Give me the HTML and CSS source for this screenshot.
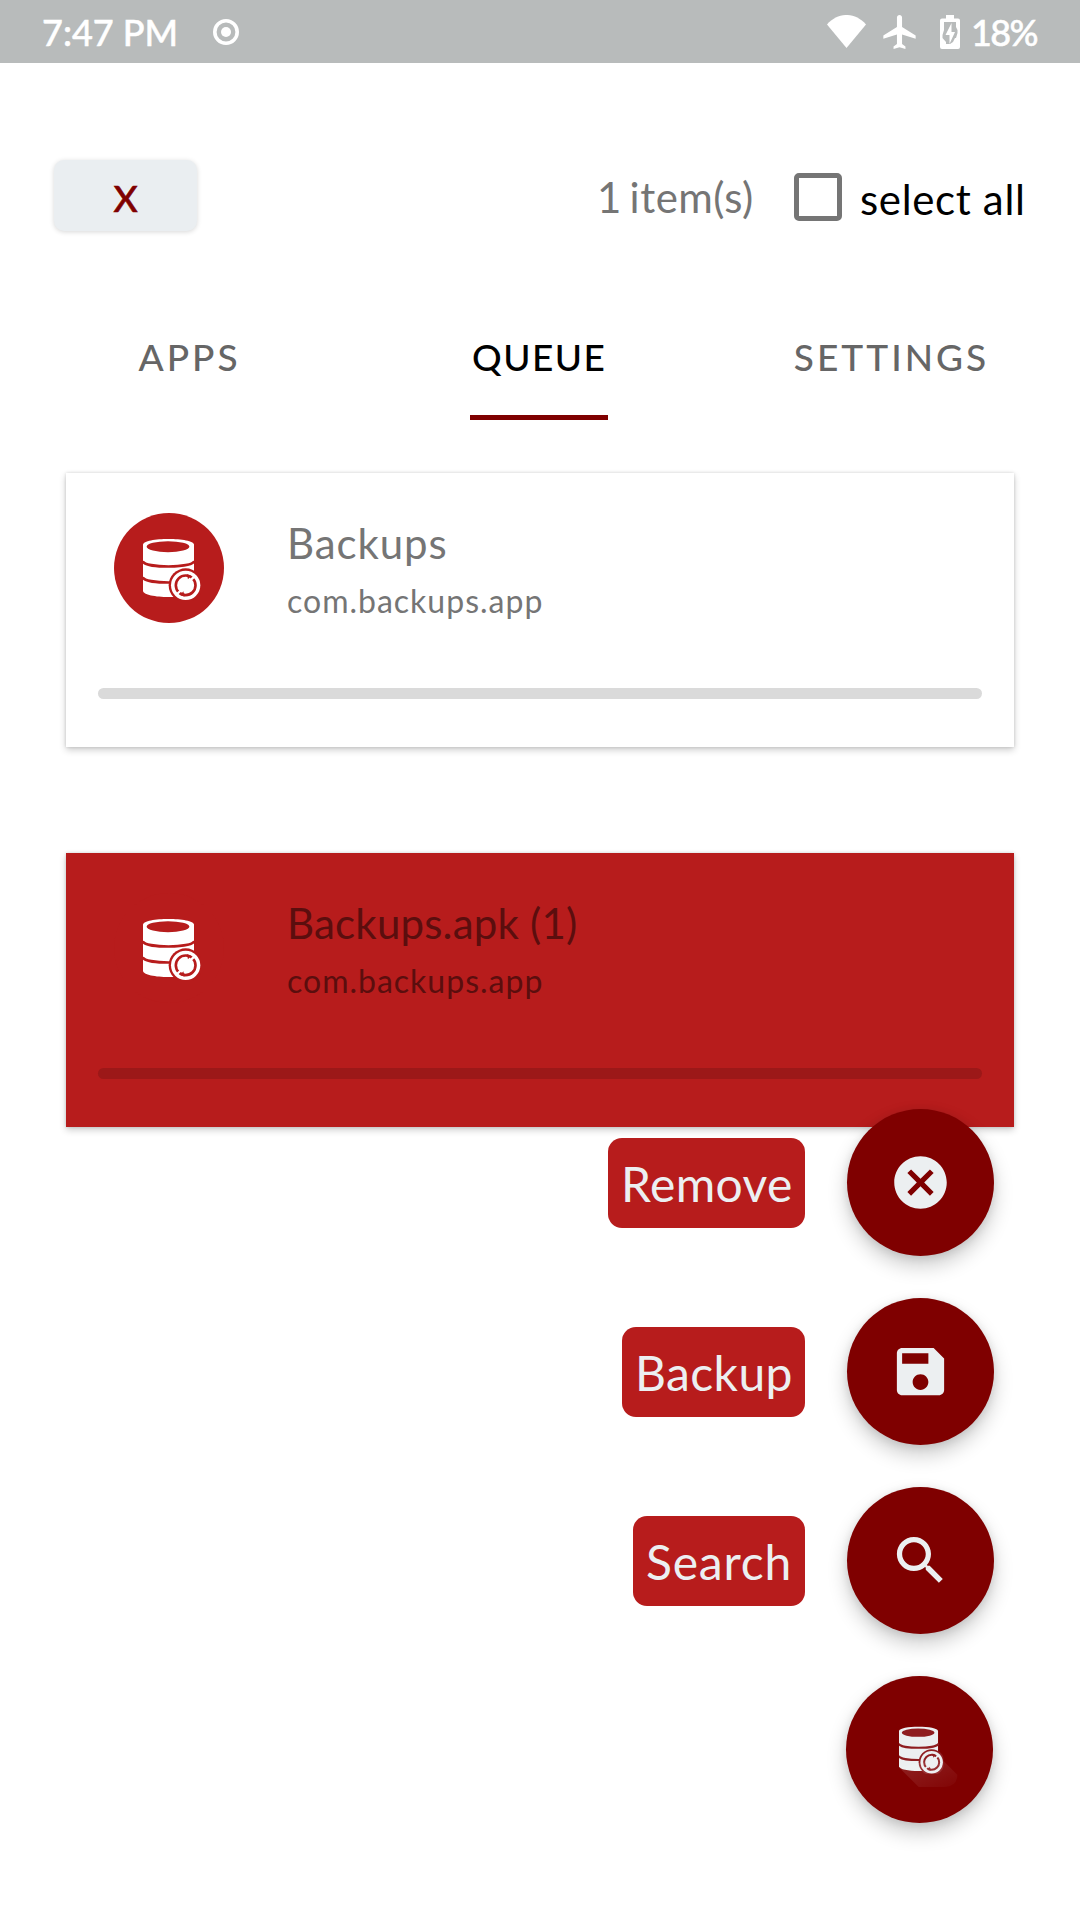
FILE: index.html
```html
<!DOCTYPE html>
<html lang="en">
<head>
<meta charset="utf-8">
<title>Backups</title>
<link rel="stylesheet" href="styles.css">
</head>
<body>
<svg class="defs" aria-hidden="true">
  <symbol id="database" viewBox="129 114 174 188">
    <path fill="currentColor" d="M129 134C129 111 282 111 282 134V272C282 297 129 297 129 272Z"/>
    <ellipse class="db-gap" cx="204" cy="140" rx="64" ry="16.500"/>
    <path class="db-line" d="M128 183C134 205 277 205 283 183M128 231C134 253 277 253 283 231"/>
    <circle class="db-ring" cx="257" cy="256" r="51"/>
    <circle fill="currentColor" cx="257" cy="256" r="44"/>
    <circle class="db-arrow" cx="257" cy="256" r="29.500"/>
    <path class="db-notch" d="M270 242L286 227M244 270L228 285"/>
    <path class="db-gap" d="M260 222L273 227L264 238ZM254 290L241 285L250 274Z"/>
  </symbol>
</svg>
<header class="status-bar">
  <span class="clock">7:47 PM</span>
  <svg class="target" viewBox="0 0 28 28"><circle cx="14" cy="14" r="11.200" fill="none" stroke="currentColor" stroke-width="3.600"/><circle cx="14" cy="14" r="5" fill="currentColor"/></svg>
  <div class="status-icons">
    <svg class="wifi" viewBox="0 0 39 33"><path d="M0 9.500C11-3.200 28-3.200 39 9.500L19.500 33Z"/></svg>
    <svg class="plane" viewBox="2 2 19 20"><path d="M21 16v-2l-8-5V3.500C13 2.670 12.330 2 11.500 2S10 2.670 10 3.500V9l-8 5v2l8-2.500V19l-2 1.500V22l3.500-1 3.500 1v-1.500L13 19v-5.500z"/></svg>
    <svg class="battery" viewBox="0 0 20 34"><path fill-rule="evenodd" d="M6 0H14V3.500H18Q20 3.500 20 5.500V32Q20 34 18 34H2Q0 34 0 32V5.500Q0 3.500 2 3.500H6ZM4 7V15L2.500 20V23L6 27V29H10L13 27L15 23H16L17.500 18V15L16 12V7Z"/><path d="M11.500 8L5.500 20H9.500V29L15 17H11.500Z"/></svg>
    <span class="charge">18%</span>
  </div>
</header>
<main>
  <section class="toolbar">
    <button class="clear">X</button>
    <span class="count">1 item(s)</span>
    <label class="select"><span class="box"></span><span class="select-text">select all</span></label>
  </section>
  <nav class="tabs">
    <a class="tab">APPS</a>
    <a class="tab active">QUEUE</a>
    <a class="tab settings">SETTINGS</a>
  </nav>
  <section class="list">
    <article class="card">
      <div class="app">
        <div class="avatar"><svg class="db"><use href="#database"/></svg></div>
        <div><h2 class="name">Backups</h2><p class="package">com.backups.app</p></div>
      </div>
      <div class="progress"></div>
    </article>
    <article class="card selected">
      <div class="app">
        <div class="avatar"><svg class="db"><use href="#database"/></svg></div>
        <div><h2 class="name">Backups.apk (1)</h2><p class="package">com.backups.app</p></div>
      </div>
      <div class="progress"></div>
    </article>
  </section>
</main>
<aside class="fab-menu">
  <div class="action"><span class="label remove">Remove</span><button class="fab"><svg viewBox="0 0 24 24"><path d="M12 2C6.470 2 2 6.470 2 12s4.470 10 10 10 10-4.470 10-10S17.530 2 12 2zm5 13.590L15.590 17 12 13.410 8.410 17 7 15.590 10.590 12 7 8.410 8.410 7 12 10.590 15.590 7 17 8.410 13.410 12 17 15.590z"/></svg></button></div>
  <div class="action"><span class="label backup">Backup</span><button class="fab"><svg viewBox="0 0 24 24"><path d="M17 3H5c-1.110 0-2 .9-2 2v14c0 1.100.89 2 2 2h14c1.100 0 2-.9 2-2V7l-4-4zm-5 16c-1.660 0-3-1.340-3-3s1.340-3 3-3 3 1.340 3 3-1.340 3-3 3zm3-10H5V5h10v4z"/></svg></button></div>
  <div class="action"><span class="label search">Search</span><button class="fab"><svg viewBox="0 0 24 24"><path d="M15.500 14h-.79l-.28-.27C15.410 12.590 16 11.110 16 9.500 16 5.910 13.090 3 9.500 3S3 5.910 3 9.500 5.910 16 9.500 16c1.610 0 3.090-.59 4.230-1.570l.27.28v.79l5 4.990L20.490 19l-4.990-5zm-6 0C7.010 14 5 11.990 5 9.500S7.010 5 9.500 5 14 7.010 14 9.500 11.990 14 9.500 14z"/></svg></button></div>
  <div class="action"><button class="fab main-fab"><svg class="cast" viewBox="0 0 180 180"><defs><linearGradient id="fade" x1="0" y1="0" x2="1" y2="1"><stop offset="0" stop-color="#fff" stop-opacity=".14"/><stop offset="1" stop-color="#fff" stop-opacity=".02"/></linearGradient></defs><path fill="url(#fade)" d="M4 122L62 180H140Q178 178 178 143L127 92Z"/></svg><svg class="db"><use href="#database"/></svg></button></div>
</aside>
</body>
</html>
```
FILE: styles.css
```css
* { box-sizing: border-box; }
body {
  margin: 0;
  height: 1920px;
  position: relative;
  overflow: hidden;
  background: #fff;
  color: #000;
  font-family: Lato, "Open Sans", sans-serif;
  font-size: 42px;
}
button { border: 0; padding: 0; font: inherit; }
h2, p { margin: 0; font-weight: 400; }
.defs { position: absolute; width: 0; height: 0; }

.status-bar {
  height: 63px;
  padding: 0 44px 0 42px;
  display: flex;
  align-items: center;
  background: #b8bbbb;
  color: #fff;
  font-size: 36px;
  font-weight: 500;
  line-height: 66px;
}
.status-bar svg { fill: currentColor; }
.clock, .charge { white-space: nowrap; -webkit-text-stroke: .5px currentColor; }
.clock { width: 170px; }
.target { width: 28px; height: 28px; }
.status-icons { margin-left: auto; display: flex; align-items: center; }
.wifi { width: 39px; height: 33px; margin-right: 17px; }
.plane { width: 33px; height: 34px; margin-right: 24px; }
.battery { width: 20px; height: 34px; margin-right: 11px; }
.charge { width: 65px; letter-spacing: -1.6px; }

.toolbar {
  height: 71px;
  margin: 97px 56px 0 54px;
  display: flex;
  align-items: center;
}
.clear {
  width: 143px;
  height: 71px;
  border-radius: 10px;
  background: #eaeef1;
  color: #7f0000;
  font-size: 37px;
  font-weight: 500;
  padding-top: 3px;
  -webkit-text-stroke: .6px currentColor;
  box-shadow: 0 1px 5px rgba(0, 0, 0, .16);
}
.count {
  margin-left: auto;
  width: 156px;
  margin-right: 41px;
  padding-top: 3px;
  color: #757575;
  letter-spacing: .5px;
  word-spacing: -3.500px;
  white-space: nowrap;
}
.select { display: flex; align-items: center; gap: 18px; }
.box { width: 48px; height: 48px; margin-top: 3px; border: 5px solid #757575; border-radius: 5px; }
.select-text { width: 164px; padding-top: 7px; letter-spacing: .65px; white-space: nowrap; }

.tabs {
  height: 126px;
  margin-top: 63px;
  display: grid;
  grid-template-columns: 379px 320px 381px;
  color: #666;
  font-size: 37px;
  font-weight: 500;
  letter-spacing: 3px;
}
.tab { justify-self: center; line-height: 126px; height: 126px; }
.settings { padding-left: 4px; }
.active { width: 138px; color: #000; border-bottom: 5px solid #7f0000; padding-left: 2px; letter-spacing: 1.500px; }

.list {
  padding: 53px 66px 0;
  display: grid;
  gap: 106px;
}
.card {
  height: 274px;
  padding: 40px 32px 0;
  background: #fff;
  box-shadow: 0 3px 7px rgba(0, 0, 0, .2), 0 0 3px rgba(0, 0, 0, .14);
}
.app { display: flex; gap: 63px; padding-left: 16px; color: #757575; }
.avatar {
  --gap: #b71c1c;
  width: 110px;
  height: 110px;
  flex: none;
  border-radius: 50%;
  display: flex;
  padding: 25px 0 0 29px;
  background: #b71c1c;
  color: #fff;
}
.db { display: block; width: 58px; height: 62.700px; }
.db-gap, .db-ring { fill: var(--gap); }
.db-line { fill: none; stroke: var(--gap); stroke-width: 8; }
.db-arrow { fill: none; stroke: var(--gap); stroke-width: 8; }
.db-notch { fill: none; stroke: currentColor; stroke-width: 7; }
.name { font-size: 42px; line-height: 50px; padding-top: 5px; letter-spacing: .9px; }
.package { font-size: 32px; line-height: 40px; padding-top: 13px; letter-spacing: 1px; }
.progress { height: 11px; margin-top: 65px; border-radius: 6px; background: #dadada; }
.selected { background: #b71c1c; }
.selected .app { color: #5b0e0e; }
.selected .name { letter-spacing: .2px; }
.selected .progress { background: #9c1818; }

.fab-menu {
  position: absolute;
  right: 86px;
  top: 1109px;
  display: grid;
  gap: 42px;
}
.action { display: flex; align-items: center; justify-content: flex-end; gap: 42px; }
.label {
  height: 90px;
  padding-left: 13px;
  border-radius: 14px;
  background: #b71c1c;
  color: #eceff1;
  font-size: 48px;
  line-height: 91px;
  letter-spacing: .4px;
  white-space: nowrap;
}
.remove { width: 197px; }
.backup { width: 183px; }
.search { width: 172px; letter-spacing: .8px; }
.fab {
  width: 147px;
  height: 147px;
  position: relative;
  border-radius: 50%;
  display: grid;
  place-items: center;
  background: #7f0000;
  color: #eceff1;
  box-shadow: 0 10px 20px rgba(0, 0, 0, .2), 0 2px 8px rgba(0, 0, 0, .1);
}
.fab svg { width: 63px; height: 63px; fill: currentColor; }
.main-fab { --gap: #8e1d20; margin-right: 1px; padding-left: 4px; }
.main-fab .db { width: 44.400px; height: 48px; }
.main-fab .cast { position: absolute; left: 52px; top: 51px; width: 60px; height: 60px; }
```
